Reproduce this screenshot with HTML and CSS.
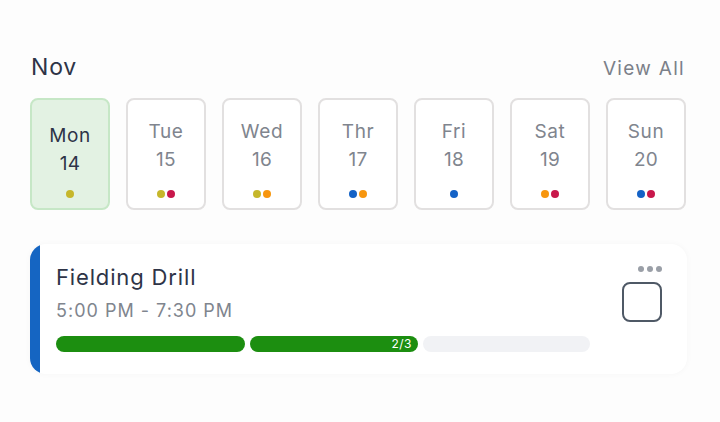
FILE: index.html
```html
<!DOCTYPE html>
<html>
<head>
<meta charset="utf-8">
<link rel="stylesheet" href="styles.css">
</head>
<body>
<div class="page">
  <div class="header">
    <div class="month">Nov</div>
    <div class="view-all">View All</div>
  </div>
  <div class="days">
    <div class="day active"><div class="dname">Mon</div><div class="dnum">14</div><div class="dots"><span class="dot y"></span></div></div>
    <div class="day"><div class="dname">Tue</div><div class="dnum">15</div><div class="dots"><span class="dot y"></span><span class="dot r"></span></div></div>
    <div class="day"><div class="dname">Wed</div><div class="dnum">16</div><div class="dots"><span class="dot y"></span><span class="dot o"></span></div></div>
    <div class="day"><div class="dname">Thr</div><div class="dnum">17</div><div class="dots"><span class="dot b"></span><span class="dot o"></span></div></div>
    <div class="day"><div class="dname">Fri</div><div class="dnum">18</div><div class="dots"><span class="dot b"></span></div></div>
    <div class="day"><div class="dname">Sat</div><div class="dnum">19</div><div class="dots"><span class="dot o"></span><span class="dot r"></span></div></div>
    <div class="day"><div class="dname">Sun</div><div class="dnum">20</div><div class="dots"><span class="dot b"></span><span class="dot r"></span></div></div>
  </div>
  <div class="event">
    <div class="stripe"></div>
    <div class="event-main">
      <div class="title">Fielding Drill</div>
      <div class="time">5:00 PM - 7:30 PM</div>
      <div class="bars">
        <div class="bar done"></div>
        <div class="bar done"><span class="count">2/3</span></div>
        <div class="bar"></div>
      </div>
    </div>
    <div class="event-side">
      <div class="more"><span></span><span></span><span></span></div>
      <div class="check"></div>
    </div>
  </div>
</div>
</body>
</html>
```
FILE: styles.css
```css
html, body { margin: 0; padding: 0; }
body {
  background: #fdfdfd;
  font-family: "Inter", sans-serif;
  width: 720px;
  height: 422px;
  overflow: hidden;
}
.page { padding: 52px 34px 0 30px; }
.header {
  display: flex;
  justify-content: space-between;
  align-items: baseline;
  padding-left: 1px;
}
.month { font-size: 23px; color: #2e3447; line-height: 30px; letter-spacing: 0.8px; }
.view-all { font-size: 19px; color: #7b8089; letter-spacing: 1.3px; line-height: 30px; margin-right: 1px; }
.days {
  display: grid;
  grid-template-columns: repeat(7, 80px);
  gap: 16px;
  margin-top: 14px;
}
.day {
  box-sizing: border-box;
  height: 112px;
  border: 2px solid #e2e0e0;
  border-radius: 8px;
  background: #fff;
  display: flex;
  flex-direction: column;
  align-items: center;
  color: #80858e;
  padding-top: 19px;
}
.day.active { background: #e3f2e3; border-color: #c6e7c6; color: #2e3447; }
.dname { font-size: 19px; line-height: 26px; letter-spacing: 0.6px; }
.day.active .dname { margin-top: 4px; }
.dnum { font-size: 19px; line-height: 26px; margin-top: 2px; letter-spacing: 0.3px; }
.day.active .dnum { margin-top: 2px; }
.dots { display: flex; gap: 2px; margin-top: 17px; }
.day.active .dots { margin-top: 13px; }
.dot { width: 8px; height: 8px; border-radius: 50%; }
.dot.y { background: #c6b72b; }
.dot.r { background: #c8184b; }
.dot.o { background: #f7960e; }
.dot.b { background: #1462c6; }
.event {
  margin-top: 34px;
  height: 130px;
  width: 657px;
  background: #fff;
  border-radius: 16px;
  display: flex;
  box-shadow: 0 0 6px rgba(0,0,0,0.035);
  overflow: hidden;
}
.stripe { width: 10px; background: #1565c2; flex: none; }
.event-main { padding: 18px 0 0 16px; width: 534px; }
.title { font-size: 22px; color: #2e3447; line-height: 30px; letter-spacing: 0.85px; }
.time { font-size: 18px; color: #80858e; line-height: 26px; margin-top: 6px; letter-spacing: 1px; }
.bars {
  display: grid;
  grid-template-columns: 189px 168px 167px;
  gap: 5px;
  margin-top: 12px;
}
.bar { height: 16px; border-radius: 8px; background: #f1f2f5; position: relative; }
.bar.done { background: #1c8e10; }
.count {
  position: absolute; right: 6px; top: 0;
  font-size: 12px; line-height: 16px; color: #fff; letter-spacing: 0.5px;
}
.event-side {
  margin-left: 32px;
  display: flex;
  flex-direction: column;
  align-items: flex-end;
  padding-top: 22px;
}
.more { display: flex; gap: 3px; height: 6px; }
.more span { width: 6px; height: 6px; border-radius: 50%; background: #9a9fa7; }
.check {
  margin-top: 10px;
  box-sizing: border-box;
  width: 40px; height: 40px;
  border: 2px solid #4f5966;
  border-radius: 8px;
}
```
